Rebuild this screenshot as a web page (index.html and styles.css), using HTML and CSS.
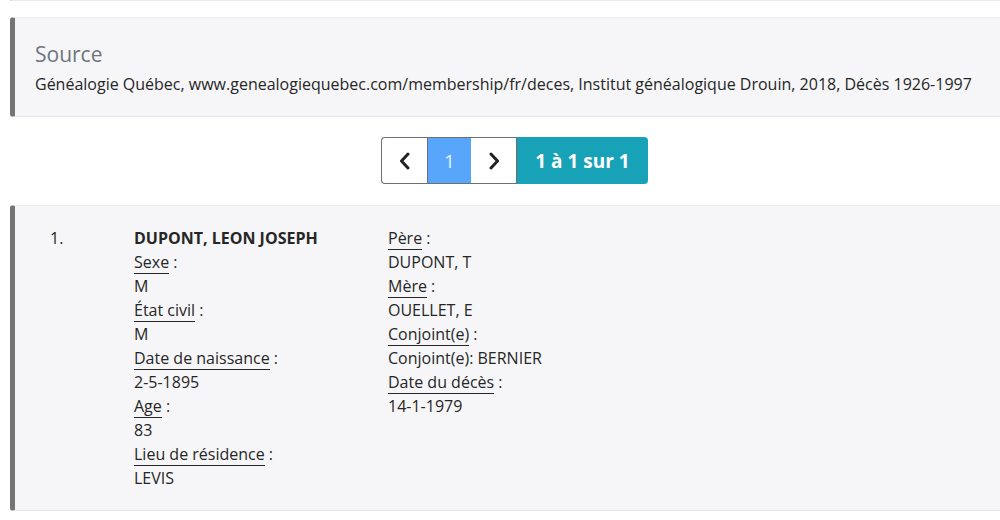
FILE: index.html
```html
<!DOCTYPE html>
<html lang="fr">
<head>
    <meta charset="UTF-8">
    <meta name="viewport" content="width=device-width, initial-scale=1.0">
    <title>Décès 1926-1997</title>
    <link rel="stylesheet" href="styles.css">
</head>
<body>

<div class="page">
    <div class="callout callout-info prev-callout"></div>

    <div class="callout source">
        <h4 class="source-title">Source</h4>
        <p class="source-text">Généalogie Québec, www.genealogiequebec.com/membership/fr/deces, Institut généalogique Drouin, 2018, Décès 1926-1997</p>
    </div>

    <nav class="pager">
        <a class="pager-btn pager-prev" href="#" aria-label="Précédent">
            <svg width="14" height="18" viewBox="0 0 14 18"><path d="M10 2 L3.5 9 L10 16" fill="none" stroke="#222" stroke-width="3" stroke-linecap="round" stroke-linejoin="round"/></svg>
        </a>
        <span class="pager-btn pager-current">1</span>
        <a class="pager-btn pager-next" href="#" aria-label="Suivant">
            <svg width="14" height="18" viewBox="0 0 14 18"><path d="M4 2 L10.5 9 L4 16" fill="none" stroke="#222" stroke-width="3" stroke-linecap="round" stroke-linejoin="round"/></svg>
        </a>
        <span class="pager-info">1 à 1 sur 1</span>
    </nav>

    <div class="callout record">
        <div class="record-num">1.</div>
        <div class="record-col">
            <div class="record-name">DUPONT, LEON JOSEPH</div>
            <div><span class="label">Sexe</span> :</div>
            <div>M</div>
            <div><span class="label">État civil</span> :</div>
            <div>M</div>
            <div><span class="label">Date de naissance</span> :</div>
            <div>2-5-1895</div>
            <div><span class="label">Age</span> :</div>
            <div>83</div>
            <div><span class="label">Lieu de résidence</span> :</div>
            <div>LEVIS</div>
        </div>
        <div class="record-col">
            <div><span class="label">Père</span> :</div>
            <div>DUPONT, T</div>
            <div><span class="label">Mère</span> :</div>
            <div>OUELLET, E</div>
            <div><span class="label">Conjoint(e)</span> :</div>
            <div>Conjoint(e): BERNIER</div>
            <div><span class="label">Date du décès</span> :</div>
            <div>14-1-1979</div>
        </div>
    </div>
</div>

</body>
</html>
```

FILE: styles.css
```css
html, body {
    overflow: hidden;
}

body {
    font-family: 'Open Sans', 'Liberation Sans', sans-serif;
    font-size: 16px;
    line-height: 24px;
    color: #262626;
    background-color: #fff;
    margin: 0;
}

.page {
    width: 1009px;
    margin-left: 10px;
}

.callout {
    background-color: #f6f6f8;
    border-left: 5px solid #757575;
    border-top: 1px solid #ececee;
    border-bottom: 1px solid #e6e6e8;
    border-radius: 3px 0 0 3px;
}

.prev-callout {
    height: 0;
    margin-top: -1px;
    border-top: none;
    border-left-color: #a9d4f0;
    border-bottom: 2px solid #ececee;
    background-color: #fff;
}

.source {
    margin-top: 16px;
    padding: 24px 20px 20px 20px;
}

.source-title {
    margin: 0 0 6px 0;
    font-size: 21px;
    font-weight: normal;
    line-height: 24px;
    color: #6c757d;
}

.source-text {
    margin: 0;
}

.pager {
    display: flex;
    justify-content: center;
    margin: 20px 0 21px 0;
}

.pager-btn {
    display: flex;
    align-items: center;
    justify-content: center;
    height: 47px;
    box-sizing: border-box;
    text-decoration: none;
}

.pager-prev,
.pager-next {
    width: 46px;
    background-color: #fff;
    border: 1px solid #6f6f6f;
}

.pager-prev {
    border-right: none;
    border-radius: 4px 0 0 4px;
}

.pager-next {
    border-left: none;
}

.pager-current {
    width: 44px;
    background-color: #58a6fc;
    color: #e6f2ff;
    font-size: 19px;
    border-top: 1px solid #6f6f6f;
    border-bottom: 1px solid #6f6f6f;
    border-left: 1px solid #6f6f6f;
}

.pager-info {
    display: flex;
    align-items: center;
    justify-content: center;
    width: 131px;
    height: 47px;
    background-color: #17a2b8;
    color: #fff;
    font-size: 19px;
    font-weight: bold;
    border-radius: 0 4px 4px 0;
}

.record {
    display: grid;
    grid-template-columns: 84px 254px auto;
    padding: 20px 35px 20px 35px;
}

.record-name {
    font-weight: bold;
}

.label {
    border-bottom: 1px solid #262626;
}
```
